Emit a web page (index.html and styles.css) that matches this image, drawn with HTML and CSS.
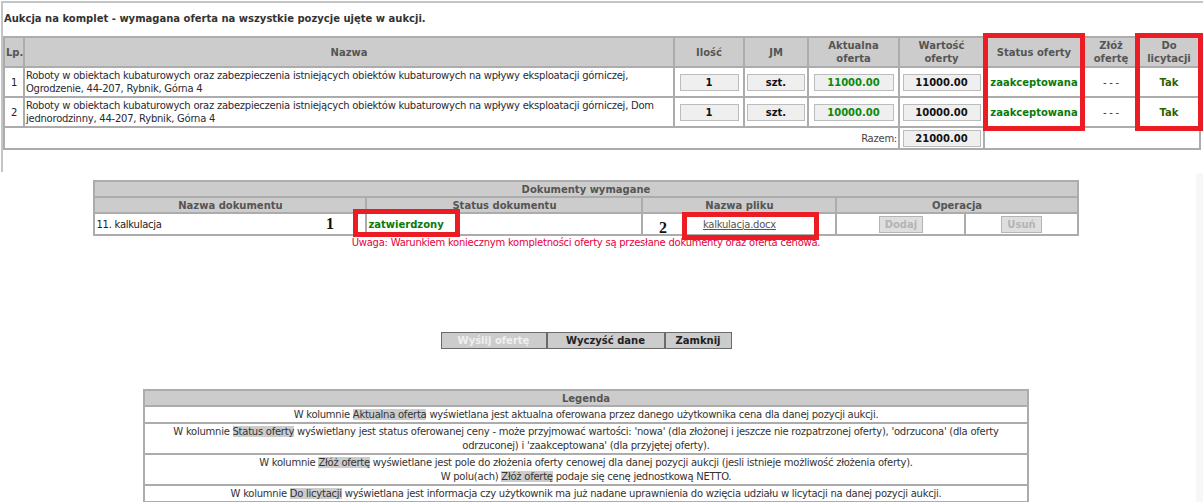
FILE: index.html
```html
<!DOCTYPE html>
<html lang="pl">
<head>
<meta charset="utf-8">
<title>Aukcja</title>
<link rel="stylesheet" href="styles.css">
</head>
<body>
<div class="page">
  <div class="frame">
    <h1 class="title">Aukcja na komplet - wymagana oferta na wszystkie pozycje ujęte w aukcji.</h1>
    <table class="grid items">
      <colgroup>
        <col class="c-lp"><col class="c-name"><col class="c-qty"><col class="c-jm"><col class="c-akt"><col class="c-war"><col class="c-st"><col class="c-zl"><col class="c-do">
      </colgroup>
      <tr class="head">
        <th>Lp.</th><th>Nazwa</th><th>Ilość</th><th>JM</th><th>Aktualna<br>oferta</th><th>Wartość<br>oferty</th><th>Status oferty</th><th>Złóż<br>ofertę</th><th>Do<br>licytacji</th>
      </tr>
      <tr class="row">
        <td class="lp">1</td>
        <td class="name">Roboty w obiektach kubaturowych oraz zabezpieczenia istniejących obiektów kubaturowych na wpływy eksploatacji górniczej, Ogrodzenie, 44-207, Rybnik, Górna 4</td>
        <td class="c"><span class="box qty">1</span></td>
        <td class="c"><span class="box jm">szt.</span></td>
        <td class="c"><span class="box akt green">11000.00</span></td>
        <td class="c"><span class="box war">11000.00</span></td>
        <td class="c status">zaakceptowana</td>
        <td class="c dash">- - -</td>
        <td class="c tak">Tak</td>
      </tr>
      <tr class="row">
        <td class="lp">2</td>
        <td class="name">Roboty w obiektach kubaturowych oraz zabezpieczenia istniejących obiektów kubaturowych na wpływy eksploatacji górniczej, Dom jednorodzinny, 44-207, Rybnik, Górna 4</td>
        <td class="c"><span class="box qty">1</span></td>
        <td class="c"><span class="box jm">szt.</span></td>
        <td class="c"><span class="box akt green">10000.00</span></td>
        <td class="c"><span class="box war">10000.00</span></td>
        <td class="c status">zaakceptowana</td>
        <td class="c dash">- - -</td>
        <td class="c tak">Tak</td>
      </tr>
      <tr class="sum">
        <td colspan="5" class="razem">Razem:</td>
        <td class="c"><span class="box war">21000.00</span></td>
        <td colspan="3"></td>
      </tr>
    </table>
  </div>

  <div class="lower">
    <table class="grid docs">
      <colgroup>
        <col class="d-name"><col class="d-st"><col class="d-file"><col class="d-add"><col class="d-del">
      </colgroup>
      <tr class="head"><th colspan="5">Dokumenty wymagane</th></tr>
      <tr class="head"><th>Nazwa dokumentu</th><th>Status dokumentu</th><th>Nazwa pliku</th><th colspan="2">Operacja</th></tr>
      <tr class="drow">
        <td class="dname">11. kalkulacja</td>
        <td class="dstatus">zatwierdzony</td>
        <td class="c"><a class="file" href="#">kalkulacja.docx</a></td>
        <td class="c"><span class="btn-dis">Dodaj</span></td>
        <td class="c"><span class="btn-dis">Usuń</span></td>
      </tr>
    </table>
    <p class="warn">Uwaga: Warunkiem koniecznym kompletności oferty są przesłane dokumenty oraz oferta cenowa.</p>

    <div class="buttons">
      <span class="btn disabled b-send">Wyślij ofertę</span>
      <span class="btn b-clear">Wyczyść dane</span>
      <span class="btn b-close">Zamknij</span>
    </div>

    <table class="grid legend">
      <tr class="head"><th>Legenda</th></tr>
      <tr><td>W kolumnie <span class="hl">Aktualna oferta</span> wyświetlana jest aktualna oferowana przez danego użytkownika cena dla danej pozycji aukcji.</td></tr>
      <tr><td>W kolumnie <span class="hl">Status oferty</span> wyświetlany jest status oferowanej ceny - może przyjmować wartości: 'nowa' (dla złożonej i jeszcze nie rozpatrzonej oferty), 'odrzucona' (dla oferty<br>odrzuconej) i 'zaakceptowana' (dla przyjętej oferty).</td></tr>
      <tr><td>W kolumnie <span class="hl">Złóż ofertę</span> wyświetlane jest pole do złożenia oferty cenowej dla danej pozycji aukcji (jesli istnieje możliwość złożenia oferty).<br>W polu(ach) <span class="hl">Złóż ofertę</span> podaje się cenę jednostkową NETTO.</td></tr>
      <tr><td>W kolumnie <span class="hl">Do licytacji</span> wyświetlana jest informacja czy użytkownik ma już nadane uprawnienia do wzięcia udziału w licytacji na danej pozycji aukcji.</td></tr>
    </table>
  </div>

  <div class="scroll-strip"></div>

  <div class="mark m-status"></div>
  <div class="mark m-do"></div>
  <div class="mark m-doc"></div>
  <div class="mark m-file"></div>
  <span class="num n1">1</span>
  <span class="num n2">2</span>
</div>
</body>
</html>
```

FILE: styles.css
```css
html, body {
  margin: 0;
  padding: 0;
  background: #fff;
}
body {
  font-family: "DejaVu Sans", Verdana, sans-serif;
  font-size: 10px;
  color: #222;
}
.page {
  position: relative;
  width: 1203px;
  height: 502px;
  overflow: hidden;
}
.frame {
  margin: 1px 0 0 1px;
  border-top: 2px solid #c4c4c4;
  border-left: 2px solid #c4c4c4;
  height: 169px;
}
.title {
  margin: 0;
  height: 33px;
  line-height: 32px;
  font-size: 10px;
  font-weight: bold;
  color: #333;
  padding-left: 1px;
}
.grid {
  border-collapse: separate;
  border-spacing: 2px;
  background: #acacac;
  table-layout: fixed;
}
.grid th {
  background: #cccccc;
  color: #555;
  font-weight: bold;
  padding: 0 1px;
  text-align: center;
  line-height: 13px;
}
.grid td {
  background: #fff;
  padding: 0 1px;
  line-height: 13px;
  letter-spacing: -0.25px;
}
.items {
  width: 1198px;
}
.c-lp { width: 18px; }
.c-name { width: 648px; }
.c-qty { width: 68px; }
.c-jm { width: 62px; }
.c-akt { width: 89px; }
.c-war { width: 83px; }
.c-st { width: 98px; }
.c-zl { width: 52px; }
.c-do { width: 60px; }
.items .head th { height: 28px; }
.items .row td { height: 28px; }
.items .sum td { height: 20px; }
.lp { text-align: center; }
.name { text-align: left; color: #2a2a33; }
.c { text-align: center; }
.box {
  display: inline-block;
  box-sizing: border-box;
  height: 17px;
  line-height: 15px;
  background: #efefef;
  border: 1px solid #bcbcbc;
  font-weight: bold;
  color: #111;
  text-align: center;
  vertical-align: middle;
  letter-spacing: 0;
}
.qty { width: 59px; }
.jm { width: 58px; }
.akt { width: 80px; }
.war { width: 78px; }
.green { color: #0b8a0b; }
.grid td.status {
  color: #0a7a0a;
  font-weight: bold;
  letter-spacing: 0;
}
.dash { color: #333; }
.grid td.tak {
  color: #2f5f00;
  font-weight: bold;
  letter-spacing: 0;
}
.razem {
  text-align: right;
  color: #444;
}

.lower {
  width: 1172px;
  padding-top: 8px;
}
.docs {
  width: 985px;
  margin: 0 auto;
}
.d-name { width: 270px; }
.d-st { width: 274px; }
.d-file { width: 192px; }
.d-add { width: 127px; }
.d-del { width: 110px; }
.docs .head th { height: 14px; }
.docs .drow td { height: 20px; }
.grid td.dstatus {
  color: #0a7a0a;
  font-weight: bold;
  letter-spacing: 0;
}
.file {
  color: #555;
  text-decoration: underline;
}
.btn-dis {
  display: inline-block;
  box-sizing: border-box;
  height: 17px;
  line-height: 15px;
  padding: 0 5px;
  background: #dedede;
  border: 1px solid #b4b4b4;
  color: #b4b4b4;
  font-weight: bold;
  vertical-align: middle;
  letter-spacing: 0;
}
.warn {
  margin: 0;
  text-align: center;
  color: #e8003c;
  line-height: 13px;
  letter-spacing: -0.25px;
}
.buttons {
  display: flex;
  justify-content: center;
  margin-top: 83px;
}
.btn {
  box-sizing: border-box;
  height: 17px;
  line-height: 15px;
  border: 1px solid #6a6a6a;
  background: #cccccc;
  color: #222;
  font-weight: bold;
  text-align: center;
}
.b-send { width: 106px; }
.b-clear { width: 118px; }
.b-close { width: 67px; }
.btn.disabled {
  color: #f0f0f0;
}
.legend {
  width: 886px;
  margin: 40px auto 0;
}
.legend th { height: 14px; }
.legend td {
  text-align: center;
  color: #333;
  padding: 1px 2px 0;
  line-height: 14px;
}
.hl {
  background: #cccccc;
}

.scroll-strip {
  position: absolute;
  left: 1196px;
  top: 173px;
  width: 7px;
  height: 329px;
  background: #f7f7f7;
}
.mark {
  position: absolute;
  box-sizing: border-box;
  border: 5px solid #ec1c24;
}
.m-status { left: 983px; top: 33px; width: 102px; height: 98px; }
.m-do { left: 1135px; top: 33px; width: 68px; height: 98px; }
.m-doc { left: 353px; top: 209px; width: 107px; height: 28px; }
.m-file { left: 682px; top: 212px; width: 137px; height: 28px; }
.num {
  position: absolute;
  font-family: "Liberation Serif", serif;
  font-weight: bold;
  font-size: 16px;
  color: #111;
}
.n1 { left: 326px; top: 215px; }
.n2 { left: 659px; top: 219px; }
```
